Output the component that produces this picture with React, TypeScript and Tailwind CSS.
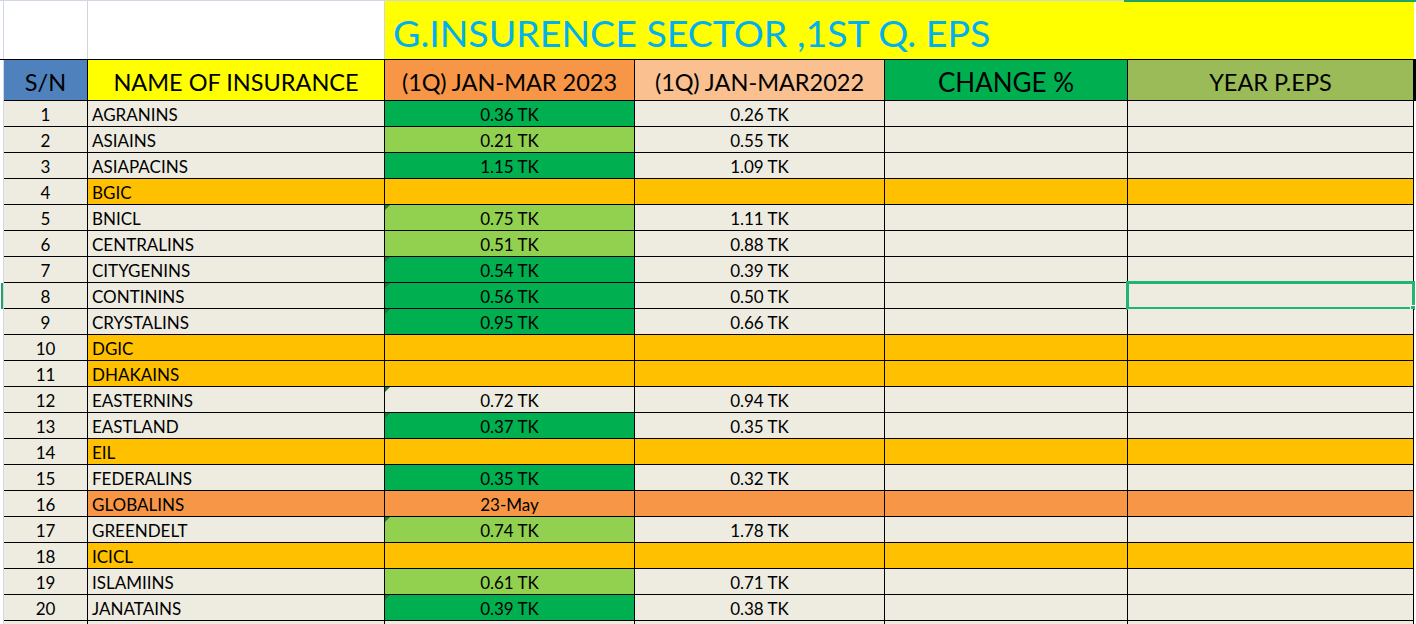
import React from "react";

type Row = {
  sn: number;
  name: string;
  q23: string;
  q22: string;
  rowBg: string;
  q23Bg: string;
  mark?: boolean;
};

const TAN = "bg-[#eeece1]";
const AMBER = "bg-[#ffc000]";
const ORANGE = "bg-[#f79646]";
const DARK = "bg-[#00b050]";
const LIGHT = "bg-[#92d050]";

const rows: Row[] = [
  { sn: 1, name: "AGRANINS", q23: "0.36 TK", q22: "0.26 TK", rowBg: TAN, q23Bg: DARK },
  { sn: 2, name: "ASIAINS", q23: "0.21 TK", q22: "0.55 TK", rowBg: TAN, q23Bg: LIGHT },
  { sn: 3, name: "ASIAPACINS", q23: "1.15 TK", q22: "1.09 TK", rowBg: TAN, q23Bg: DARK },
  { sn: 4, name: "BGIC", q23: "", q22: "", rowBg: AMBER, q23Bg: AMBER },
  { sn: 5, name: "BNICL", q23: "0.75 TK", q22: "1.11 TK", rowBg: TAN, q23Bg: LIGHT, mark: true },
  { sn: 6, name: "CENTRALINS", q23: "0.51 TK", q22: "0.88 TK", rowBg: TAN, q23Bg: LIGHT },
  { sn: 7, name: "CITYGENINS", q23: "0.54 TK", q22: "0.39 TK", rowBg: TAN, q23Bg: DARK, mark: true },
  { sn: 8, name: "CONTININS", q23: "0.56 TK", q22: "0.50 TK", rowBg: TAN, q23Bg: DARK, mark: true },
  { sn: 9, name: "CRYSTALINS", q23: "0.95 TK", q22: "0.66 TK", rowBg: TAN, q23Bg: DARK, mark: true },
  { sn: 10, name: "DGIC", q23: "", q22: "", rowBg: AMBER, q23Bg: AMBER },
  { sn: 11, name: "DHAKAINS", q23: "", q22: "", rowBg: AMBER, q23Bg: AMBER },
  { sn: 12, name: "EASTERNINS", q23: "0.72 TK", q22: "0.94 TK", rowBg: TAN, q23Bg: TAN, mark: true },
  { sn: 13, name: "EASTLAND", q23: "0.37 TK", q22: "0.35 TK", rowBg: TAN, q23Bg: DARK, mark: true },
  { sn: 14, name: "EIL", q23: "", q22: "", rowBg: AMBER, q23Bg: AMBER },
  { sn: 15, name: "FEDERALINS", q23: "0.35 TK", q22: "0.32 TK", rowBg: TAN, q23Bg: DARK },
  { sn: 16, name: "GLOBALINS", q23: "23-May", q22: "", rowBg: ORANGE, q23Bg: ORANGE },
  { sn: 17, name: "GREENDELT", q23: "0.74 TK", q22: "1.78 TK", rowBg: TAN, q23Bg: LIGHT, mark: true },
  { sn: 18, name: "ICICL", q23: "", q22: "", rowBg: AMBER, q23Bg: AMBER },
  { sn: 19, name: "ISLAMIINS", q23: "0.61 TK", q22: "0.71 TK", rowBg: TAN, q23Bg: LIGHT },
  { sn: 20, name: "JANATAINS", q23: "0.39 TK", q22: "0.38 TK", rowBg: TAN, q23Bg: DARK, mark: true },
];

const grid =
  "grid grid-cols-[4px_84px_297px_250px_250px_243px_286px_2px]";
const cell = "border-r border-b border-black flex items-center";

const App: React.FC = () => {
  return (
    <div
      className="w-[1416px] h-[624px] overflow-hidden bg-white text-black"
      style={{ fontFamily: "Lato, 'Open Sans', sans-serif" }}
    >
      {/* title row */}
      <div className={`${grid} h-[59px] border-t border-[#d0d7e5]`}>
        <div className="border-r border-[#d0d7e5]" />
        <div className="border-r border-[#d4d4d4]" />
        <div className="border-r border-[#d4d4d4]" />
        <div className="col-span-4 bg-[#ffff00] flex items-center pl-[8px] pt-[5px] text-[37.5px] leading-none text-[#00b0f0]">
          G.INSURENCE SECTOR ,1ST Q. EPS
        </div>
        <div className="relative">
          <div className="absolute -top-px -left-[290px] right-0 h-[2px] bg-[#21a366]" />
        </div>
      </div>

      {/* header row */}
      <div className={`${grid} h-[42px] border-t border-black text-[23.5px] leading-none`}>
        <div className="border-r border-[#d0d7e5]" />
        <div className={`${cell} justify-center pt-[6px] bg-[#4f81bd]`}>S/N</div>
        <div className={`${cell} justify-center pt-[6px] bg-[#ffff00]`}>NAME OF INSURANCE</div>
        <div className={`${cell} justify-center pt-[6px] bg-[#f79646]`}>(1Q) JAN-MAR 2023</div>
        <div className={`${cell} justify-center pt-[6px] bg-[#fac090]`}>(1Q) JAN-MAR2022</div>
        <div className={`${cell} justify-center pt-[4px] bg-[#00b050] text-[26px]`}>CHANGE %</div>
        <div className={`${cell} justify-center pt-[6px] bg-[#9bbb59]`}>YEAR P.EPS</div>
        <div className="bg-[#ffc000] border-l-2 border-black" />
      </div>

      {/* data rows */}
      {rows.map((r) => (
        <div key={r.sn} className={`${grid} h-[26px] text-[17px] leading-none`}>
          <div className="border-r border-[#d0d7e5] relative">
            {r.sn === 8 && <div className="absolute left-[1px] top-0 bottom-0 w-[2px] bg-[#21a366]" />}
          </div>
          <div className={`${cell} ${TAN} justify-center pt-px`}>{r.sn}</div>
          <div className={`${cell} ${r.rowBg} pl-[4px] pt-px`}>{r.name}</div>
          <div className={`${cell} ${r.q23Bg} justify-center pt-px relative`}>
            {r.mark && (
              <span className="absolute top-0 left-0 w-0 h-0 border-t-[5px] border-r-[5px] border-t-[#1e7b34] border-r-transparent" />
            )}
            {r.q23}
          </div>
          <div className={`${cell} ${r.rowBg} justify-center pt-px`}>{r.q22}</div>
          <div className={`${cell} ${r.rowBg}`} />
          <div className={`${cell} ${r.rowBg} relative`}>
            {r.sn === 8 && (
              <>
                <div className="absolute -top-[2px] -left-[2px] -right-[2px] -bottom-[2px] border-[3px] border-[#21b573]" />
                <div className="absolute -right-[3px] -bottom-[3px] w-[6px] h-[6px] bg-[#21b573] border border-white" />
              </>
            )}
          </div>
          <div />
        </div>
      ))}

      {/* partial row 21 */}
      <div className={`${grid} h-[26px]`}>
        <div className="border-r border-[#d0d7e5]" />
        <div className={`${cell} ${TAN}`} />
        <div className={`${cell} ${TAN}`} />
        <div className={`${cell} ${TAN}`} />
        <div className={`${cell} ${TAN}`} />
        <div className={`${cell} ${TAN}`} />
        <div className={`${cell} ${TAN}`} />
        <div />
      </div>
    </div>
  );
};

export default App;
